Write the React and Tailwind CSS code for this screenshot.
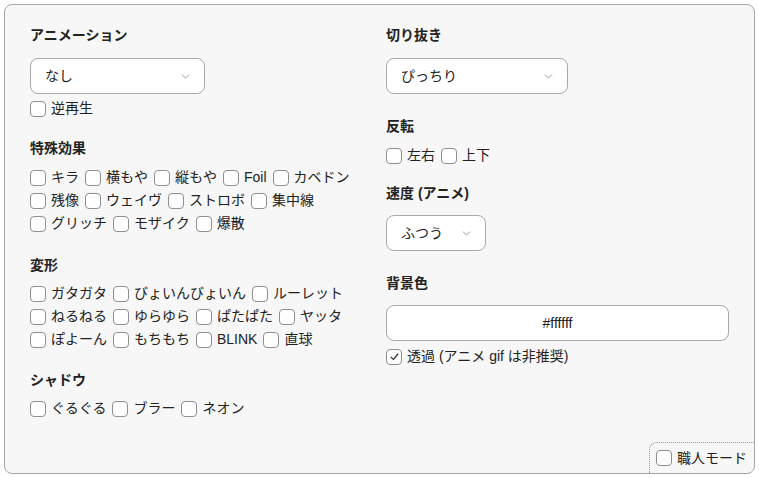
import React, { useState } from "react";
import { ChevronDown } from "lucide-react";

const FONT = { fontFamily: '"Liberation Sans", "Noto Sans CJK JP", sans-serif' };

const Check = ({ label, defaultChecked = false, className = "mr-[6px]" }) => {
  const [on, setOn] = useState(defaultChecked);
  return (
    <label
      className={`flex items-center h-[23px] gap-[5px] cursor-pointer ${className}`}
      onClick={() => setOn(!on)}
    >
      <span className="w-[16px] h-[16px] rounded-[4px] border border-[#8f8f8f] bg-white flex items-center justify-center">
        {on && (
          <svg width="11" height="11" viewBox="0 0 12 12" fill="none">
            <path d="M2 6.5 L4.8 9.2 L10 3" stroke="#333" strokeWidth="1.4" />
          </svg>
        )}
      </span>
      <span>{label}</span>
    </label>
  );
};

const Heading = ({ children, className = "" }) => (
  <h3 className={`text-[14px] font-bold leading-[20px] text-[#222] ${className}`}>
    {children}
  </h3>
);

const Select = ({ value, width }) => (
  <div
    className={`${width} h-[36px] rounded-[8px] border border-[#a8a8a8] bg-white flex items-center justify-between pl-[14px] pr-[12px]`}
  >
    <span>{value}</span>
    <ChevronDown size={13} strokeWidth={1.5} className="text-[#888]" />
  </div>
);

const Row = ({ items }) => (
  <div className="flex flex-wrap">
    {items.map((t) => (
      <Check key={t} label={t} />
    ))}
  </div>
);

export default function App() {
  return (
    <div className="p-1 bg-white" style={FONT}>
      <div className="relative h-[470px] rounded-[8px] border border-[#a6a6a6] bg-[#f7f7f7] text-[14px] text-[#222] px-[25px] pt-[20px]">
        <div className="grid grid-cols-2 gap-x-[13px]">
          {/* left column */}
          <div>
            <Heading className="mb-[13px]">アニメーション</Heading>
            <Select value="なし" width="w-[175px]" />
            <div className="mt-[3px] flex">
              <Check label="逆再生" />
            </div>

            <Heading className="mt-[18px] mb-[8px]">特殊効果</Heading>
            <Row items={["キラ", "横もや", "縦もや", "Foil", "カベドン"]} />
            <Row items={["残像", "ウェイヴ", "ストロボ", "集中線"]} />
            <Row items={["グリッチ", "モザイク", "爆散"]} />

            <Heading className="mt-[20px] mb-[7px]">変形</Heading>
            <Row items={["ガタガタ", "びょいんびょいん", "ルーレット"]} />
            <Row items={["ねるねる", "ゆらゆら", "ぱたぱた", "ヤッタ"]} />
            <Row items={["ぽよーん", "もちもち", "BLINK", "直球"]} />

            <Heading className="mt-[19px] mb-[7px]">シャドウ</Heading>
            <Row items={["ぐるぐる", "ブラー", "ネオン"]} />
          </div>

          {/* right column */}
          <div>
            <Heading className="mb-[13px]">切り抜き</Heading>
            <Select value="ぴっちり" width="w-[182px]" />

            <Heading className="mt-[22px] mb-[8px]">反転</Heading>
            <Row items={["左右", "上下"]} />

            <Heading className="mt-[16px] mb-[12px]">速度 (アニメ)</Heading>
            <Select value="ふつう" width="w-[100px]" />

            <Heading className="mt-[22px] mb-[12px]">背景色</Heading>
            <div className="h-[36px] rounded-[8px] border border-[#a8a8a8] bg-white flex items-center justify-center">
              #ffffff
            </div>
            <div className="mt-[4px] flex">
              <Check label="透過 (アニメ gif は非推奨)" defaultChecked />
            </div>
          </div>
        </div>

        <div className="absolute right-0 bottom-0 h-[31px] pl-[6px] pr-[7px] flex items-center rounded-tl-[8px] border-t border-l border-dotted border-[#9a9a9a]">
          <Check label="職人モード" className="mr-0" />
        </div>
      </div>
    </div>
  );
}
